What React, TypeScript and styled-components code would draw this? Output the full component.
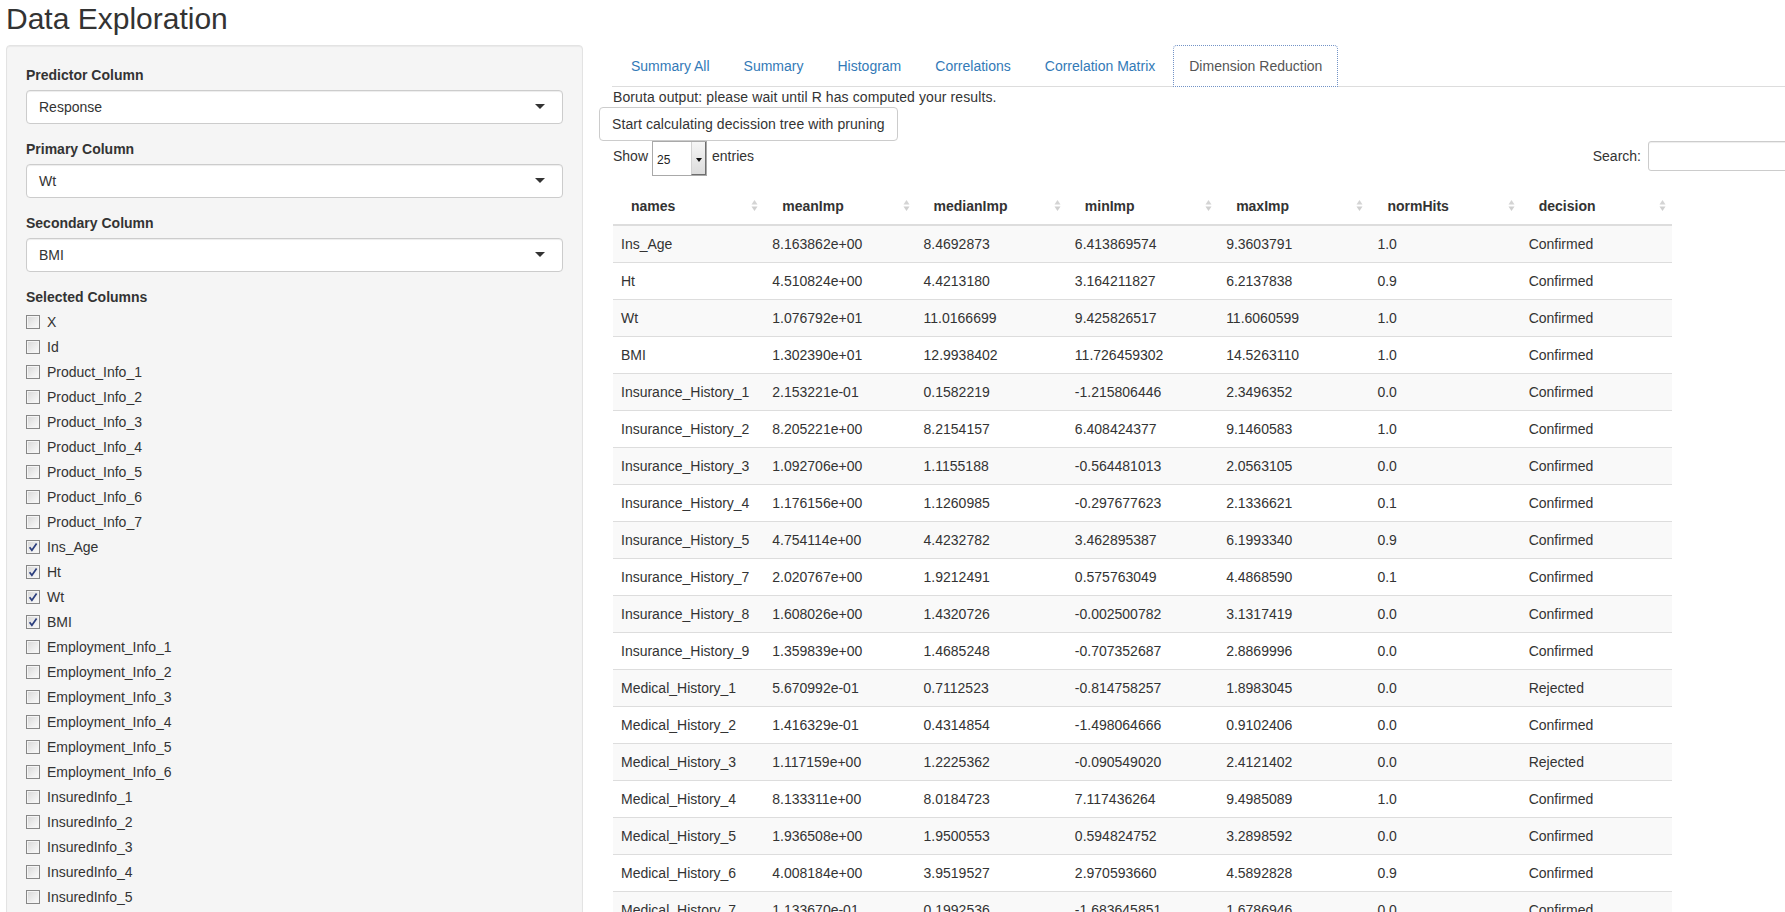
import React from "react";
import styled, { createGlobalStyle } from "styled-components";

const GlobalStyle = createGlobalStyle`
  html, body {
    margin: 0;
    padding: 0;
    overflow: hidden;
    background: #ffffff;
  }
  body {
    font-family: "Liberation Sans", Arial, Helvetica, sans-serif;
    font-size: 14px;
    line-height: 20px;
    color: #333333;
  }
  * { box-sizing: border-box; }
`;

const Page = styled.div`
  padding: 0 0 0 6px;
  width: 1850px;
`;

const Title = styled.h2`
  margin: 2px 0 10px 0;
  font-size: 30px;
  line-height: 33px;
  font-weight: 400;
  color: #333333;
`;

const Layout = styled.div`
  display: flex;
  align-items: flex-start;
  gap: 16px;
`;

const Sidebar = styled.div`
  flex: none;
  width: 577px;
  min-height: 1100px;
  padding: 19px;
  background: #f5f5f5;
  border: 1px solid #e3e3e3;
  border-radius: 4px;
  box-shadow: inset 0 1px 1px rgba(0, 0, 0, 0.05);
`;

const FormGroup = styled.div`
  margin-bottom: 15px;
`;

const FieldLabel = styled.div`
  font-weight: 700;
  line-height: 20px;
  margin-bottom: 5px;
  color: #333333;
`;

const SelectBox = styled.div`
  position: relative;
  height: 34px;
  padding: 0 12px;
  display: flex;
  align-items: center;
  background: #ffffff;
  border: 1px solid #cccccc;
  border-radius: 4px;
  box-shadow: inset 0 1px 1px rgba(0, 0, 0, 0.075);
  color: #333333;
`;

const Caret = styled.span`
  position: absolute;
  right: 17px;
  top: 50%;
  margin-top: -3px;
  width: 0;
  height: 0;
  border-left: 5px solid transparent;
  border-right: 5px solid transparent;
  border-top: 5px solid #333333;
`;

const CheckList = styled.div`
  display: flex;
  flex-direction: column;
  gap: 5px;
`;

const CheckRow = styled.label`
  display: flex;
  align-items: flex-start;
  height: 20px;
  line-height: 20px;
  color: #333333;
`;

const CheckBox = styled.span<{ $checked?: boolean }>`
  flex: none;
  width: 14px;
  height: 14px;
  margin: 3px 7px 0 0;
  border: 1px solid #878787;
  background: linear-gradient(135deg, #d6d6d6 0%, #ececec 55%, #fbfbfb 100%);
  box-shadow: inset 0 0 0 1px #f4f4f4;
  display: flex;
  align-items: center;
  justify-content: center;
`;

const Main = styled.div`
  flex: none;
  width: 1229px;
`;

const TabList = styled.ul`
  display: flex;
  list-style: none;
  margin: 0 0 0 13px;
  padding: 0 0 0 3px;
  border-bottom: 1px solid #dddddd;
`;

const TabItem = styled.li`
  margin-bottom: -1px;
`;

const TabLink = styled.a<{ $active?: boolean }>`
  display: block;
  margin-right: 2px;
  padding: 10px 15px;
  line-height: 20px;
  border-radius: 4px 4px 0 0;
  text-decoration: none;
  color: ${(p) => (p.$active ? "#555555" : "#337ab7")};
  background: ${(p) => (p.$active ? "#ffffff" : "transparent")};
  border: 1px ${(p) => (p.$active ? "dotted #7393c6" : "solid transparent")};
  cursor: pointer;
`;

const Notice = styled.div`
  margin-left: 14px;
  line-height: 20px;
  letter-spacing: 0.1px;
  color: #333333;
`;

const ActionButton = styled.button`
  display: block;
  height: 34px;
  padding: 6px 12px;
  margin: 0;
  font-family: inherit;
  font-size: 14px;
  line-height: 20px;
  letter-spacing: 0.075px;
  color: #333333;
  background: #ffffff;
  border: 1px solid #cccccc;
  border-radius: 4px;
`;

const Controls = styled.div`
  display: flex;
  align-items: flex-start;
  height: 35px;
  margin-left: 14px;
`;

const LengthGroup = styled.div`
  display: flex;
  align-items: flex-start;
`;

const LengthText = styled.span`
  margin-top: 5px;
  line-height: 20px;
`;

const LengthSelect = styled.div`
  display: flex;
  width: 55px;
  height: 35px;
  margin: 0 5px 0 4px;
  background: #ffffff;
  border: 1px solid #a9a9a9;
`;

const LengthValue = styled.span`
  flex: 1;
  padding: 8px 0 0 4px;
  font-size: 12px;
  line-height: 20px;
  color: #222222;
`;

const LengthArrow = styled.span`
  flex: none;
  width: 15px;
  display: flex;
  align-items: center;
  justify-content: center;
  background: linear-gradient(#f6f6f6, #dcdcdc);
  border-left: 1px solid #d2d2d2;
  border-right: 1px solid #6e6e6e;
  border-bottom: 1px solid #6e6e6e;
  &::after {
    content: "";
    width: 0;
    height: 0;
    margin-top: 3px;
    border-left: 3px solid transparent;
    border-right: 3px solid transparent;
    border-top: 4px solid #111111;
  }
`;

const SearchGroup = styled.div`
  display: flex;
  align-items: center;
  margin-left: auto;
`;

const SearchLabel = styled.span`
  line-height: 20px;
`;

const SearchInput = styled.div`
  width: 180px;
  height: 30px;
  margin-left: 7px;
  background: #ffffff;
  border: 1px solid #cccccc;
  border-radius: 3px;
  box-shadow: inset 0 1px 1px rgba(0, 0, 0, 0.075);
`;

const DataTable = styled.table`
  margin: 10px 0 0 14px;
  width: 1059px;
  table-layout: fixed;
  border-collapse: separate;
  border-spacing: 0;
`;

const HeadCell = styled.th`
  position: relative;
  text-align: left;
  padding: 10px 18px 8px 18px;
  line-height: 20px;
  font-weight: 700;
  color: #333333;
  border-bottom: 2px solid #dddddd;
`;

const SortIcon = styled.svg`
  position: absolute;
  right: 6px;
  top: 50%;
  margin-top: -6px;
`;

const BodyRow = styled.tr`
  &:nth-child(odd) {
    background: #f9f9f9;
  }
  &:first-child td {
    border-top: none;
  }
`;

const Cell = styled.td`
  padding: 8px;
  line-height: 20px;
  color: #333333;
  white-space: nowrap;
  overflow: hidden;
  border-top: 1px solid #dddddd;
`;

const selects = [
  { label: "Predictor Column", value: "Response" },
  { label: "Primary Column", value: "Wt" },
  { label: "Secondary Column", value: "BMI" },
];

const columnsList: [string, boolean][] = [
  ["X", false],
  ["Id", false],
  ["Product_Info_1", false],
  ["Product_Info_2", false],
  ["Product_Info_3", false],
  ["Product_Info_4", false],
  ["Product_Info_5", false],
  ["Product_Info_6", false],
  ["Product_Info_7", false],
  ["Ins_Age", true],
  ["Ht", true],
  ["Wt", true],
  ["BMI", true],
  ["Employment_Info_1", false],
  ["Employment_Info_2", false],
  ["Employment_Info_3", false],
  ["Employment_Info_4", false],
  ["Employment_Info_5", false],
  ["Employment_Info_6", false],
  ["InsuredInfo_1", false],
  ["InsuredInfo_2", false],
  ["InsuredInfo_3", false],
  ["InsuredInfo_4", false],
  ["InsuredInfo_5", false],
  ["InsuredInfo_6", false],
  ["InsuredInfo_7", false],
];

const tabs = [
  "Summary All",
  "Summary",
  "Histogram",
  "Correlations",
  "Correlation Matrix",
  "Dimension Reduction",
];

const headers = ["names", "meanImp", "medianImp", "minImp", "maxImp", "normHits", "decision"];

const rows: string[][] = [
  ["Ins_Age", "8.163862e+00", "8.4692873", "6.413869574", "9.3603791", "1.0", "Confirmed"],
  ["Ht", "4.510824e+00", "4.4213180", "3.164211827", "6.2137838", "0.9", "Confirmed"],
  ["Wt", "1.076792e+01", "11.0166699", "9.425826517", "11.6060599", "1.0", "Confirmed"],
  ["BMI", "1.302390e+01", "12.9938402", "11.726459302", "14.5263110", "1.0", "Confirmed"],
  ["Insurance_History_1", "2.153221e-01", "0.1582219", "-1.215806446", "2.3496352", "0.0", "Confirmed"],
  ["Insurance_History_2", "8.205221e+00", "8.2154157", "6.408424377", "9.1460583", "1.0", "Confirmed"],
  ["Insurance_History_3", "1.092706e+00", "1.1155188", "-0.564481013", "2.0563105", "0.0", "Confirmed"],
  ["Insurance_History_4", "1.176156e+00", "1.1260985", "-0.297677623", "2.1336621", "0.1", "Confirmed"],
  ["Insurance_History_5", "4.754114e+00", "4.4232782", "3.462895387", "6.1993340", "0.9", "Confirmed"],
  ["Insurance_History_7", "2.020767e+00", "1.9212491", "0.575763049", "4.4868590", "0.1", "Confirmed"],
  ["Insurance_History_8", "1.608026e+00", "1.4320726", "-0.002500782", "3.1317419", "0.0", "Confirmed"],
  ["Insurance_History_9", "1.359839e+00", "1.4685248", "-0.707352687", "2.8869996", "0.0", "Confirmed"],
  ["Medical_History_1", "5.670992e-01", "0.7112523", "-0.814758257", "1.8983045", "0.0", "Rejected"],
  ["Medical_History_2", "1.416329e-01", "0.4314854", "-1.498064666", "0.9102406", "0.0", "Confirmed"],
  ["Medical_History_3", "1.117159e+00", "1.2225362", "-0.090549020", "2.4121402", "0.0", "Rejected"],
  ["Medical_History_4", "8.133311e+00", "8.0184723", "7.117436264", "9.4985089", "1.0", "Confirmed"],
  ["Medical_History_5", "1.936508e+00", "1.9500553", "0.594824752", "3.2898592", "0.0", "Confirmed"],
  ["Medical_History_6", "4.008184e+00", "3.9519527", "2.970593660", "4.5892828", "0.9", "Confirmed"],
  ["Medical_History_7", "1.133670e-01", "0.1992536", "-1.683645851", "1.6786946", "0.0", "Confirmed"],
];

const CheckMark = () => (
  <svg width="10" height="10" viewBox="0 0 10 10">
    <path d="M1.6 5.2 L3.9 8.2 L8.6 1.4" fill="none" stroke="#2c3f7e" strokeWidth="1.7" />
  </svg>
);

const SortBoth = () => (
  <SortIcon width="7" height="13" viewBox="0 0 7 13">
    <path d="M0.5 5.5 L3.5 1 L6.5 5.5 Z" fill="#d4d4d4" />
    <path d="M0.5 7.5 L6.5 7.5 L3.5 12 Z" fill="#cfcfcf" />
  </SortIcon>
);

export default function App() {
  return (
    <>
      <GlobalStyle />
      <Page>
        <Title>Data Exploration</Title>
        <Layout>
          <Sidebar>
            {selects.map((s) => (
              <FormGroup key={s.label}>
                <FieldLabel>{s.label}</FieldLabel>
                <SelectBox>
                  {s.value}
                  <Caret />
                </SelectBox>
              </FormGroup>
            ))}
            <FormGroup>
              <FieldLabel>Selected Columns</FieldLabel>
              <CheckList>
                {columnsList.map(([name, checked]) => (
                  <CheckRow key={name}>
                    <CheckBox $checked={checked}>{checked && <CheckMark />}</CheckBox>
                    {name}
                  </CheckRow>
                ))}
              </CheckList>
            </FormGroup>
          </Sidebar>
          <Main>
            <TabList>
              {tabs.map((t) => (
                <TabItem key={t}>
                  <TabLink $active={t === "Dimension Reduction"}>{t}</TabLink>
                </TabItem>
              ))}
            </TabList>
            <Notice>Boruta output: please wait until R has computed your results.</Notice>
            <ActionButton>Start calculating decission tree with pruning</ActionButton>
            <Controls>
              <LengthGroup>
                <LengthText>Show</LengthText>
                <LengthSelect>
                  <LengthValue>25</LengthValue>
                  <LengthArrow />
                </LengthSelect>
                <LengthText>entries</LengthText>
              </LengthGroup>
              <SearchGroup>
                <SearchLabel>Search:</SearchLabel>
                <SearchInput />
              </SearchGroup>
            </Controls>
            <DataTable>
              <thead>
                <tr>
                  {headers.map((h) => (
                    <HeadCell key={h}>
                      {h}
                      <SortBoth />
                    </HeadCell>
                  ))}
                </tr>
              </thead>
              <tbody>
                {rows.map((r) => (
                  <BodyRow key={r[0]}>
                    {r.map((c, i) => (
                      <Cell key={i}>{c}</Cell>
                    ))}
                  </BodyRow>
                ))}
              </tbody>
            </DataTable>
          </Main>
        </Layout>
      </Page>
    </>
  );
}
